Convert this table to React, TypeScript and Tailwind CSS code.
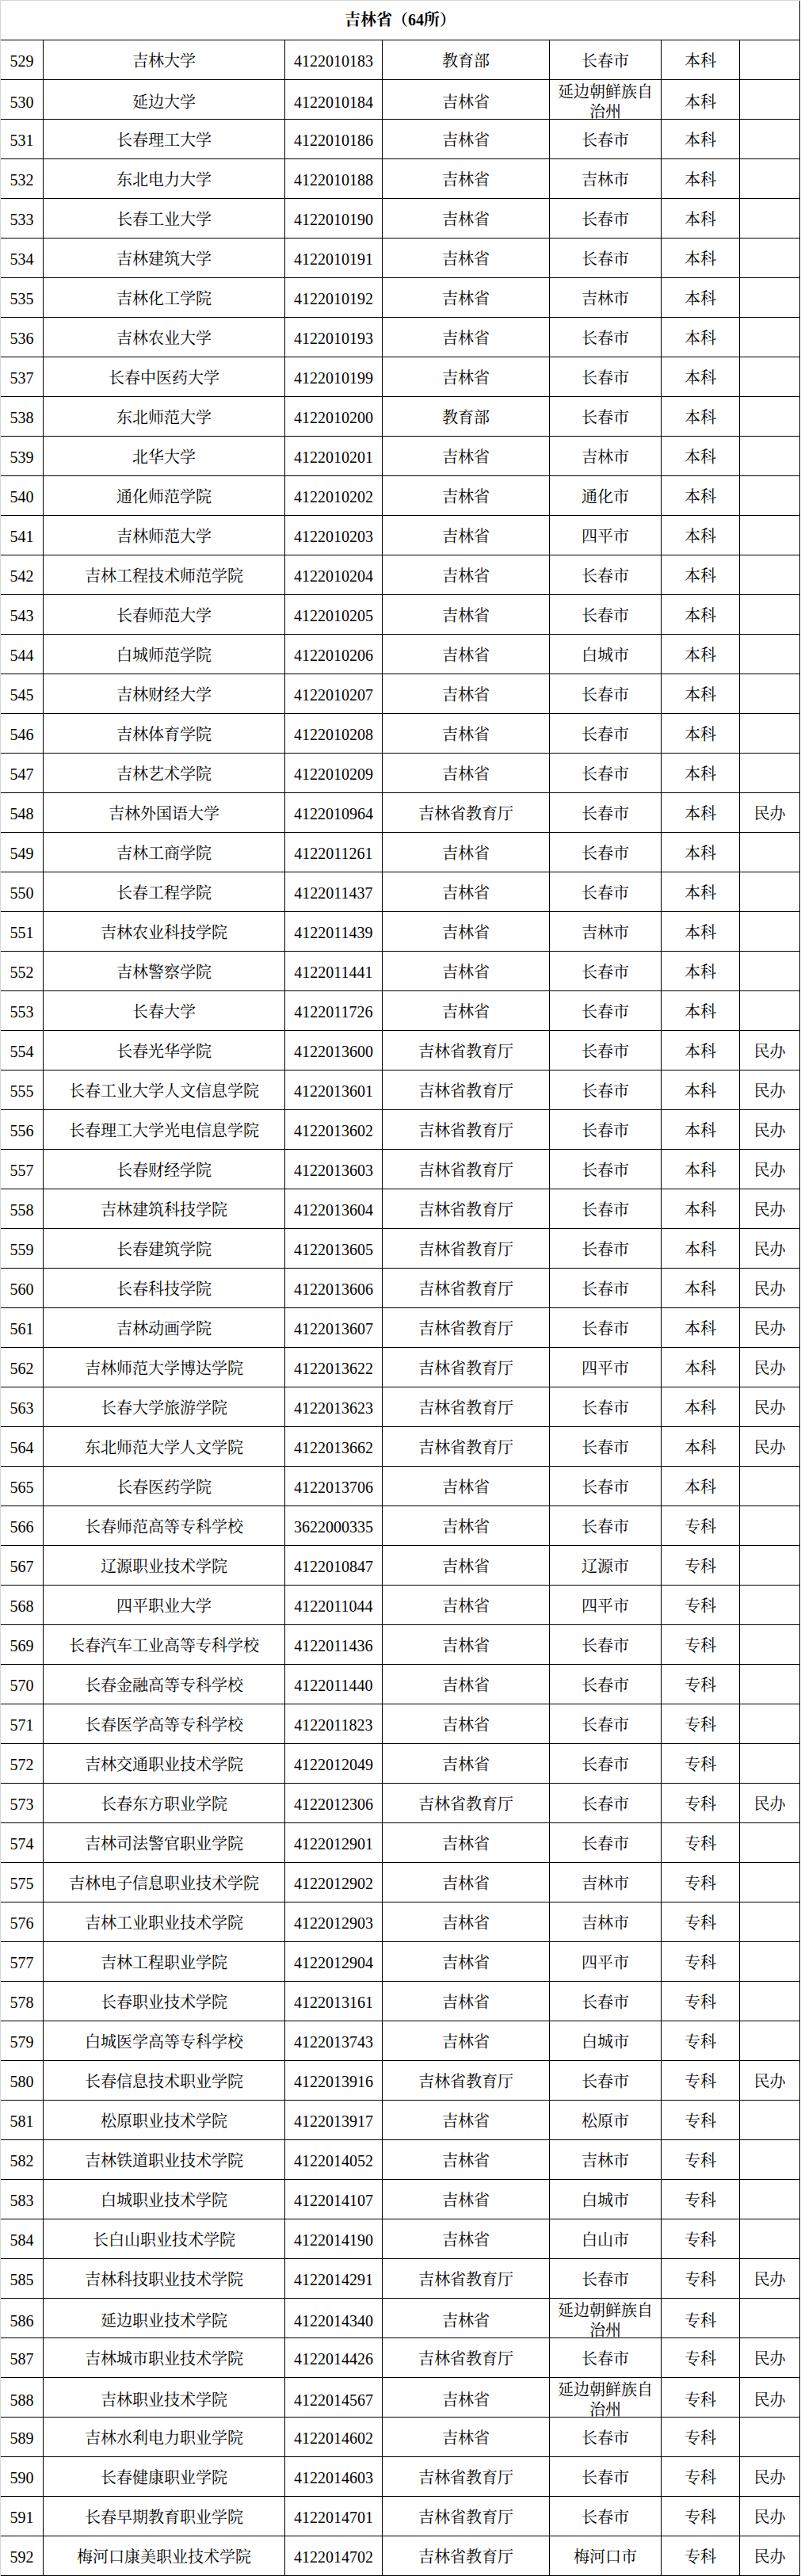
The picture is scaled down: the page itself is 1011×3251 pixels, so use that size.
import React from "react";

type Row = [string, string, string, string, string, string];

const raw = `529|吉林大学|4122010183|教育部|长春市|本科|
530|延边大学|4122010184|吉林省|延边朝鲜族自治州|本科|
531|长春理工大学|4122010186|吉林省|长春市|本科|
532|东北电力大学|4122010188|吉林省|吉林市|本科|
533|长春工业大学|4122010190|吉林省|长春市|本科|
534|吉林建筑大学|4122010191|吉林省|长春市|本科|
535|吉林化工学院|4122010192|吉林省|吉林市|本科|
536|吉林农业大学|4122010193|吉林省|长春市|本科|
537|长春中医药大学|4122010199|吉林省|长春市|本科|
538|东北师范大学|4122010200|教育部|长春市|本科|
539|北华大学|4122010201|吉林省|吉林市|本科|
540|通化师范学院|4122010202|吉林省|通化市|本科|
541|吉林师范大学|4122010203|吉林省|四平市|本科|
542|吉林工程技术师范学院|4122010204|吉林省|长春市|本科|
543|长春师范大学|4122010205|吉林省|长春市|本科|
544|白城师范学院|4122010206|吉林省|白城市|本科|
545|吉林财经大学|4122010207|吉林省|长春市|本科|
546|吉林体育学院|4122010208|吉林省|长春市|本科|
547|吉林艺术学院|4122010209|吉林省|长春市|本科|
548|吉林外国语大学|4122010964|吉林省教育厅|长春市|本科|民办
549|吉林工商学院|4122011261|吉林省|长春市|本科|
550|长春工程学院|4122011437|吉林省|长春市|本科|
551|吉林农业科技学院|4122011439|吉林省|吉林市|本科|
552|吉林警察学院|4122011441|吉林省|长春市|本科|
553|长春大学|4122011726|吉林省|长春市|本科|
554|长春光华学院|4122013600|吉林省教育厅|长春市|本科|民办
555|长春工业大学人文信息学院|4122013601|吉林省教育厅|长春市|本科|民办
556|长春理工大学光电信息学院|4122013602|吉林省教育厅|长春市|本科|民办
557|长春财经学院|4122013603|吉林省教育厅|长春市|本科|民办
558|吉林建筑科技学院|4122013604|吉林省教育厅|长春市|本科|民办
559|长春建筑学院|4122013605|吉林省教育厅|长春市|本科|民办
560|长春科技学院|4122013606|吉林省教育厅|长春市|本科|民办
561|吉林动画学院|4122013607|吉林省教育厅|长春市|本科|民办
562|吉林师范大学博达学院|4122013622|吉林省教育厅|四平市|本科|民办
563|长春大学旅游学院|4122013623|吉林省教育厅|长春市|本科|民办
564|东北师范大学人文学院|4122013662|吉林省教育厅|长春市|本科|民办
565|长春医药学院|4122013706|吉林省|长春市|本科|
566|长春师范高等专科学校|3622000335|吉林省|长春市|专科|
567|辽源职业技术学院|4122010847|吉林省|辽源市|专科|
568|四平职业大学|4122011044|吉林省|四平市|专科|
569|长春汽车工业高等专科学校|4122011436|吉林省|长春市|专科|
570|长春金融高等专科学校|4122011440|吉林省|长春市|专科|
571|长春医学高等专科学校|4122011823|吉林省|长春市|专科|
572|吉林交通职业技术学院|4122012049|吉林省|长春市|专科|
573|长春东方职业学院|4122012306|吉林省教育厅|长春市|专科|民办
574|吉林司法警官职业学院|4122012901|吉林省|长春市|专科|
575|吉林电子信息职业技术学院|4122012902|吉林省|吉林市|专科|
576|吉林工业职业技术学院|4122012903|吉林省|吉林市|专科|
577|吉林工程职业学院|4122012904|吉林省|四平市|专科|
578|长春职业技术学院|4122013161|吉林省|长春市|专科|
579|白城医学高等专科学校|4122013743|吉林省|白城市|专科|
580|长春信息技术职业学院|4122013916|吉林省教育厅|长春市|专科|民办
581|松原职业技术学院|4122013917|吉林省|松原市|专科|
582|吉林铁道职业技术学院|4122014052|吉林省|吉林市|专科|
583|白城职业技术学院|4122014107|吉林省|白城市|专科|
584|长白山职业技术学院|4122014190|吉林省|白山市|专科|
585|吉林科技职业技术学院|4122014291|吉林省教育厅|长春市|专科|民办
586|延边职业技术学院|4122014340|吉林省|延边朝鲜族自治州|专科|
587|吉林城市职业技术学院|4122014426|吉林省教育厅|长春市|专科|民办
588|吉林职业技术学院|4122014567|吉林省|延边朝鲜族自治州|专科|民办
589|吉林水利电力职业学院|4122014602|吉林省|长春市|专科|
590|长春健康职业学院|4122014603|吉林省教育厅|长春市|专科|民办
591|长春早期教育职业学院|4122014701|吉林省教育厅|长春市|专科|民办
592|梅河口康美职业技术学院|4122014702|吉林省教育厅|梅河口市|专科|民办`;

const rows: Row[] = raw.split("\n").map((l) => l.split("|") as Row);

const font = {
  fontFamily:
    '"Liberation Serif", "Noto Serif CJK SC", "Noto Sans CJK SC", serif',
};

export default function App() {
  return (
    <div
      className="w-[1011px] bg-white text-black text-[20px] leading-[25px]"
      style={font}
    >
      <div className="w-[1010px] border-l border-t border-l-[#d6d6d6] border-t-[#d6d6d6]">
        <div className="h-[50px] flex items-center justify-center border-b border-r border-black font-bold">
          吉林省（64所）
        </div>
        {rows.map((r) => (
          <div
            key={r[0]}
            className="h-[50px] grid grid-cols-[54px_305px_123px_211px_141px_99px_76px] border-b border-black"
          >
            {r.map((c, i) => (
              <div
                key={i}
                className="flex items-center justify-center text-center border-r border-black px-2 pt-[3px]"
              >
                {c}
              </div>
            ))}
          </div>
        ))}
      </div>
    </div>
  );
}
